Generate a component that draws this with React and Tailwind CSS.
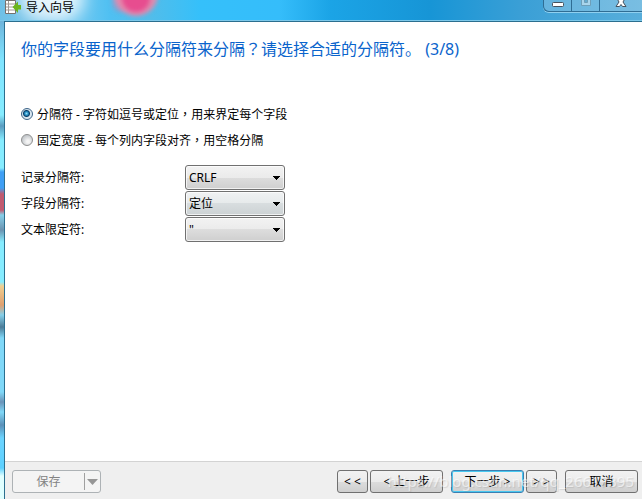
import React from 'react';
import { clsx } from 'clsx';

const buttonVariants = {
  default: 'border-[#707070] text-black',
  primary: 'border-[#3c7fb1] text-black ring-1 ring-inset ring-[#48c8f0]'
};

const delimiters = [
  { id: 'record', label: '记录分隔符:', value: 'CRLF', options: ['CRLF', 'CR', 'LF'] },
  { id: 'field', label: '字段分隔符:', value: '定位', options: ['定位', ',', ';'], cool: true },
  { id: 'text', label: '文本限定符:', value: '"', options: ['"', "'"] }
];

// centred full-width punctuation
const Punct = ({ children }) => <span className="font-['Noto_Sans_CJK_TC',sans-serif]">{children}</span>;

const WizardIcon = () => (
  <svg className="h-[15px] w-[17px] shrink-0" viewBox="0 0 17 15" aria-hidden="true">
    <path d="M.5 .5h10v13H.5z" fill="#fff" stroke="#77716d" />
    <path d="M3.500 1v12M1 4h9M1 7h9M1 10h9" stroke="#a09894" fill="none" />
    <path d="M7.500 7l5.500-5.500v3.500H16v4.500h-3v3.500z" fill="#6cb51d" />
  </svg>
);

const Wallpaper = () => (
  <div className="absolute inset-0 overflow-hidden" aria-hidden="true">
    <div className="absolute inset-0 bg-[linear-gradient(to_right,#6fc0e6_0px,#84cdf0_60px,#4fc0f2_110px,#52bdea_150px,#35c0fa_200px,#35bdfa_280px,#1ba4e6_330px,#1795d6_430px,#3a9fd6_520px,#58aedb_642px)]" />
    <div className="absolute -top-6 left-5 h-11 w-16 rounded-full bg-white/80 blur-sm" />
    <div className="absolute -top-3 left-28 h-6 w-4 rounded-full bg-[#8f9fd0]/80 blur-[2px]" />
    <div className="absolute -top-7 left-[114px] h-11 w-11 rounded-full bg-[#ee86a8]/90 blur-[2px]" />
    <div className="absolute -top-5 left-[122px] h-8 w-7 rounded-full bg-[#e8468c]/90 blur-[2px]" />
    <div className="absolute top-5 bottom-0 left-0 w-1 bg-[linear-gradient(to_bottom,#6fb3da_0px,#7fe4ff_40px,#86ecff_95px,#5b9cc0_106px,#86ecff_120px,#86ecff_148px,#3f9ff5_152px,#3f9ff5_168px,#c05a70_174px,#c05a70_190px,#86d0ea_195px,#6c93b0_210px,#86ecff_222px,#86ecff_262px,#f0cf90_266px,#e0a070_285px,#86d0ea_295px,#4c7c98_307px,#80d8f8_318px,#80d8f8_372px,#6c93b8_382px,#80d8f8_392px,#5c90b8_405px,#6cd4ff_418px,#5cd0ff_448px,#e0ffff_456px,#e0ffff_480px)]" />
  </div>
);

const CaptionButtons = () => (
  <div className="flex h-3 self-start overflow-hidden rounded-bl-md border-b border-l border-[#2f6d94] shadow-[0_1px_0_#8fd0f0] text-[#45525e]">
    <button type="button" aria-label="最小化" className="flex w-7 justify-center border-r border-[#2f6d94] bg-white/20">
      <svg className="h-3 w-4" viewBox="0 0 16 12">
        <rect x="2.500" y="2.500" width="11" height="4" rx="1" fill="#fff" stroke="currentColor" />
      </svg>
    </button>
    <button type="button" aria-label="最大化" disabled className="flex w-7 justify-center border-r border-[#2f6d94] bg-white/20">
      <svg className="h-3 w-4" viewBox="0 0 16 12">
        <path d="M3.500 -3.500h9v9h-9z" fill="#a9d5ec" stroke="#6e9fb9" />
        <path d="M6.500 -.5h3v3h-3z" fill="#65acd0" stroke="#6e9fb9" />
      </svg>
    </button>
    <button type="button" aria-label="关闭" className="flex w-[42px] justify-center bg-white/20">
      <svg className="h-3 w-4" viewBox="0 0 16 12">
        <path d="M3.500 -2.500h3L8 -.5 9.500-2.500h3L10 2l3 4.500H9.500L8 4.500 6.500 6.500H3L6 2z" fill="#fff" stroke="currentColor" />
      </svg>
    </button>
  </div>
);

const Radio = ({ children, ...props }) => (
  <label className="flex h-[26px] items-center gap-1">
    <input
      type="radio"
      name="format"
      className="h-3 w-3 shrink-0 appearance-none rounded-full border border-[#8e8f8f] bg-[radial-gradient(circle_at_60%_65%,#f4f4f4_15%,#c3c7cb_70%)] checked:border-[#3c6488] checked:bg-[radial-gradient(circle_at_45%_45%,#8fe0fb_0px,#1b7fb5_2px,#0b3c66_3px,#d5e4ee_4px,#e8eef2_6px)]"
      {...props}
    />
    <span>{children}</span>
  </label>
);

const SelectBox = ({ options, cool, ...props }) => (
  <div className="relative w-[100px]">
    <select
      className={clsx(
        'block h-[25px] w-full appearance-none rounded-[3px] border border-[#707070] pl-[3px] pr-4 ring-1 ring-inset ring-white/70',
        cool
          ? 'bg-[linear-gradient(#f0f2f3_0%,#e6eaeb_50%,#d8dddf_50%,#ccd2d4_100%)]'
          : 'bg-[linear-gradient(#f2f2f2_0%,#ebebeb_50%,#dddddd_50%,#cfcfcf_100%)]'
      )}
      {...props}
    >
      {options.map((option) => (
        <option key={option}>{option}</option>
      ))}
    </select>
    <svg className="pointer-events-none absolute top-[11px] right-[5px] h-1 w-[7px]" viewBox="0 0 7 4" shapeRendering="crispEdges">
      <path d="M0 0h7L3.500 4z" fill="#000" />
    </svg>
  </div>
);

const WizardButton = ({ variant = 'default', className, children, ...props }) => (
  <button
    type="button"
    className={clsx(
      'h-[23px] shrink-0 whitespace-nowrap rounded-[3px] border bg-[linear-gradient(#f2f2f2_0%,#ebebeb_50%,#dddddd_50%,#cfcfcf_100%)]',
      buttonVariants[variant],
      className
    )}
    {...props}
  >
    {children}
  </button>
);

const App = () => {
  return (
    <div className="relative flex min-h-screen flex-col overflow-hidden font-['Noto_Sans','Noto_Sans_CJK_SC',sans-serif] text-xs leading-4 text-black">
      <Wallpaper />

      <header className="relative flex h-[21px] shrink-0 items-start justify-between border-b border-[#7cc8ea] pl-[5px]">
        <div className="flex items-center gap-1">
          <WizardIcon />
          <span className="leading-3">导入向导</span>
        </div>
        <CaptionButtons />
      </header>

      <div className="relative ml-1 flex flex-1 flex-col border-t border-l border-[#2b6f8f] bg-white">
        <main className="flex-1 px-4 pt-[14px]">
          <h1 className="text-base leading-6 text-[#0a64cc]">
            你的字段要用什么分隔符来分隔<Punct>？</Punct>请选择合适的分隔符。 (3/8)
          </h1>

          <div className="mt-10">
            <Radio defaultChecked>
              分隔符 - 字符如逗号或定位<Punct>，</Punct>用来界定每个字段
            </Radio>
            <Radio>
              固定宽度 - 每个列内字段对齐<Punct>，</Punct>用空格分隔
            </Radio>
          </div>

          <div className="mt-3">
            {delimiters.map((item) => (
              <div key={item.id} className="flex h-[26px] items-start">
                <label htmlFor={item.id} className="w-[164px] self-center">{item.label}</label>
                <SelectBox id={item.id} defaultValue={item.value} options={item.options} cool={item.cool} />
              </div>
            ))}
          </div>
        </main>

        <footer className="relative flex shrink-0 items-center justify-between border-t border-[#d3d3d3] bg-[#efefef] pt-2 pr-1 pb-[6px] pl-[7px]">
          <div className="flex h-[23px] w-[89px] rounded-[3px] border border-[#adb2b5] bg-[#f4f4f4] text-[#838383]">
            <button type="button" disabled className="flex-1">保存</button>
            <button type="button" disabled aria-label="保存选项" className="my-0.5 flex w-4 items-center justify-center border-l border-[#a0a0a0]">
              <svg className="h-[6px] w-[11px]" viewBox="0 0 11 6">
                <path d="M0 0h11L5.500 6z" fill="#969696" />
              </svg>
            </button>
          </div>
          <div className="flex">
            <WizardButton className="w-[31px]">&lt; &lt;</WizardButton>
            <WizardButton className="ml-0.5 w-[73px]">&lt; 上一步</WizardButton>
            <WizardButton variant="primary" className="ml-2 w-[73px]">下一步 &gt;</WizardButton>
            <WizardButton className="ml-0.5 w-[31px]">&gt; &gt;</WizardButton>
            <WizardButton className="ml-2 w-[73px]">取消</WizardButton>
          </div>
          <span className="pointer-events-none absolute right-2 bottom-2 text-[15px] leading-5 text-white/60 [text-shadow:1px_1px_1px_#80808040]">
            https://blog.csdn.net/qq_26617395
          </span>
        </footer>
      </div>
    </div>
  );
};

export default App;
